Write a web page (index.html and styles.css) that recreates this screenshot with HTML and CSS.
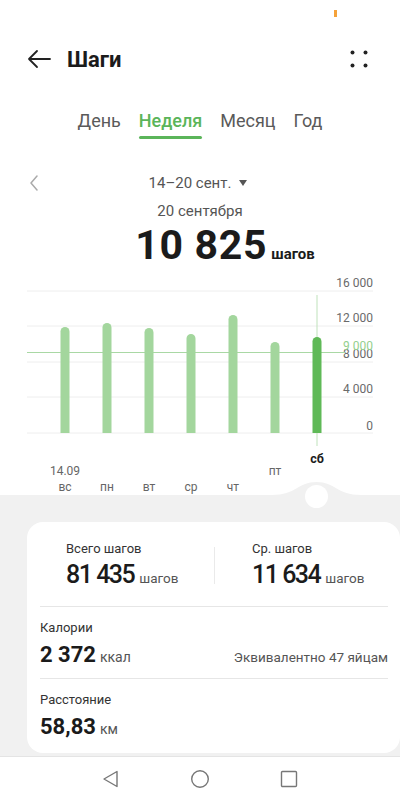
FILE: index.html
```html
<!DOCTYPE html>
<html lang="ru">
<head>
  <meta charset="UTF-8">
  <meta name="viewport" content="width=device-width, initial-scale=1.0">
  <link rel="stylesheet" href="styles.css">
  <title>Шаги</title>
</head>
<body>
  <div class="status"><span class="status-mark"></span></div>

  <header class="topbar">
    <svg class="icon-back" width="26" height="22" viewBox="0 0 26 22">
      <path d="M24 11H3M11 3L3 11L11 19" fill="none" stroke="#222" stroke-width="1.8" stroke-linecap="round" stroke-linejoin="round"/>
    </svg>
    <h1 class="title">Шаги</h1>
    <svg class="icon-more" width="18" height="18" viewBox="0 0 18 18">
      <circle cx="2.5" cy="2.5" r="2" fill="#222"/>
      <circle cx="15.5" cy="2.5" r="2" fill="#222"/>
      <circle cx="2.5" cy="15.5" r="2" fill="#222"/>
      <circle cx="15.5" cy="15.5" r="2" fill="#222"/>
    </svg>
  </header>

  <nav class="tabs">
    <div class="tab">День<span class="tab-bar"></span></div>
    <div class="tab active">Неделя<span class="tab-bar"></span></div>
    <div class="tab">Месяц<span class="tab-bar"></span></div>
    <div class="tab">Год<span class="tab-bar"></span></div>
  </nav>

  <div class="range">
    <svg class="range-prev" width="10" height="16" viewBox="0 0 10 16">
      <path d="M8 1L2 8L8 15" fill="none" stroke="#aaa" stroke-width="1.5" stroke-linecap="round" stroke-linejoin="round"/>
    </svg>
    <span class="range-text">14–20 сент.<span class="range-caret"></span></span>
  </div>
  <div class="day">20 сентября</div>
  <div class="total"><span class="total-num">10 825</span><span class="total-unit">шагов</span></div>

  <svg class="chart" width="400" height="228" viewBox="0 267 400 228">
    <g stroke="#eeeeee" stroke-width="1">
      <line x1="27" y1="291" x2="373" y2="291"/>
      <line x1="27" y1="326" x2="373" y2="326"/>
      <line x1="27" y1="362" x2="373" y2="362"/>
      <line x1="27" y1="397" x2="373" y2="397"/>
      <line x1="27" y1="433" x2="373" y2="433"/>
    </g>
    <g class="axis" text-anchor="end">
      <text x="373" y="287">16 000</text>
      <text x="373" y="322">12 000</text>
      <text x="373" y="358">8 000</text>
      <text x="373" y="393">4 000</text>
      <text x="373" y="430">0</text>
    </g>
    <line x1="317" y1="295" x2="317" y2="446" stroke="#bfe2bb" stroke-width="1"/>
    <line x1="27" y1="352.5" x2="345" y2="352.5" stroke="#a9d8a4" stroke-width="1"/>
    <text class="avg" x="373" y="350" text-anchor="end">9 000</text>
    <g fill="#a3d69d">
      <path d="M60.5 433V331.5A4.5 4.5 0 0 1 69.5 331.5V433Z"/>
      <path d="M102.5 433V327.5A4.5 4.5 0 0 1 111.5 327.5V433Z"/>
      <path d="M144.5 433V332.5A4.5 4.5 0 0 1 153.5 332.5V433Z"/>
      <path d="M186.5 433V338.5A4.5 4.5 0 0 1 195.5 338.5V433Z"/>
      <path d="M228.5 433V319.5A4.5 4.5 0 0 1 237.5 319.5V433Z"/>
      <path d="M270.5 433V346.5A4.5 4.5 0 0 1 279.5 346.5V433Z"/>
    </g>
    <path d="M312.5 433V341.5A4.5 4.5 0 0 1 321.5 341.5V433Z" fill="#5fb957"/>
    <g class="days" text-anchor="middle">
      <text class="sel" x="317" y="463">сб</text>
      <text x="275" y="475">пт</text>
      <text x="65" y="475">14.09</text>
      <text x="65" y="491">вс</text>
      <text x="107" y="491">пн</text>
      <text x="149" y="491">вт</text>
      <text x="191" y="491">ср</text>
      <text x="233" y="491">чт</text>
    </g>
  </svg>

  <section class="summary">
    <svg class="knob" width="400" height="30" viewBox="0 0 400 30">
      <path d="M272 15C296 15 298 2 316.5 2C335 2 337 15 361 15Z" fill="#f1f1f1"/>
      <circle cx="316.5" cy="16.5" r="11.5" fill="#fff"/>
    </svg>

    <div class="card">
      <div class="stats">
        <div class="stat">
          <div class="label">Всего шагов</div>
          <div class="stat-value"><span class="stat-num">81 435</span><span class="unit">шагов</span></div>
        </div>
        <div class="stat-sep"></div>
        <div class="stat">
          <div class="label">Ср. шагов</div>
          <div class="stat-value"><span class="stat-num">11 634</span><span class="unit">шагов</span></div>
        </div>
      </div>
      <div class="row">
        <div class="label">Калории</div>
        <div class="row-value">
          <span class="num">2 372</span><span class="unit">ккал</span>
          <span class="note">Эквивалентно 47 яйцам</span>
        </div>
      </div>
      <div class="row">
        <div class="label">Расстояние</div>
        <div class="row-value">
          <span class="num">58,83</span><span class="unit">км</span>
        </div>
      </div>
    </div>
  </section>

  <footer class="navbar">
    <svg width="20" height="20" viewBox="0 0 20 20">
      <path d="M16 2.5V17.5L3 10Z" fill="none" stroke="#777" stroke-width="1.4" stroke-linejoin="round"/>
    </svg>
    <svg width="20" height="20" viewBox="0 0 20 20">
      <circle cx="10" cy="10" r="8.3" fill="none" stroke="#777" stroke-width="1.4"/>
    </svg>
    <svg width="20" height="20" viewBox="0 0 20 20">
      <rect x="2.5" y="2.5" width="15" height="15" rx="1" fill="none" stroke="#777" stroke-width="1.4"/>
    </svg>
  </footer>
</body>
</html>
```

FILE: styles.css
```css
body {
  margin: 0;
  width: 400px;
  height: 800px;
  overflow: hidden;
  background: #fff;
  font-family: Roboto, "Noto Sans", sans-serif;
  color: #1b1b1b;
}
.status {
  height: 24px;
  display: flex;
  padding-left: 334px;
}
.status-mark {
  width: 3px;
  height: 7px;
  margin-top: 10px;
  background: #f5a23a;
}
.topbar {
  height: 70px;
  display: flex;
  align-items: center;
  padding: 0 32px 0 26px;
}
.title {
  margin: 0 0 0 15px;
  font-size: 22px;
  font-weight: 700;
  flex: 1;
}
.tabs {
  display: flex;
  justify-content: center;
  gap: 18px;
  padding-top: 15px;
}
.tab {
  display: flex;
  flex-direction: column;
  align-items: stretch;
  font-size: 18px;
  line-height: 24px;
  color: #5a5a5a;
}
.tab-bar {
  height: 3px;
  margin-top: 3px;
  border-radius: 2px;
}
.tab.active {
  color: #5bb55a;
  font-weight: 500;
}
.tab.active .tab-bar {
  background: #5bb55a;
}
.range {
  margin-top: 34px;
  height: 20px;
  display: flex;
  align-items: center;
  justify-content: center;
  position: relative;
}
.range-prev {
  position: absolute;
  left: 29px;
  top: 2px;
}
.range-text {
  font-size: 15px;
  color: #555;
  display: flex;
  align-items: center;
  margin-left: -4px;
}
.range-caret {
  width: 0;
  height: 0;
  margin-left: 8px;
  border-left: 4px solid transparent;
  border-right: 4px solid transparent;
  border-top: 6px solid #555;
}
.day {
  margin-top: 8px;
  line-height: 20px;
  text-align: center;
  font-size: 15px;
  color: #555;
}
.total {
  margin-top: 2px;
  height: 44px;
  display: flex;
  justify-content: center;
  align-items: baseline;
  padding-left: 50px;
}
.total-num {
  font-size: 41px;
  line-height: 44px;
  font-weight: 700;
  letter-spacing: 0.7px;
  color: #1b1b1b;
}
.total-unit {
  margin-left: 4px;
  font-size: 15px;
  font-weight: 700;
}
.chart {
  display: block;
}
.axis text {
  font-size: 12px;
  fill: #6a6a6a;
}
.avg {
  font-size: 12px;
  fill: #93cf8d;
}
.days text {
  font-size: 12px;
  fill: #666;
}
.days .sel {
  fill: #1b1b1b;
  font-weight: 700;
  font-size: 12.5px;
}
.summary {
  position: relative;
  background: #f1f1f1;
  padding: 27px 0 3px 27px;
}
.knob {
  position: absolute;
  left: 0;
  top: -15px;
}
.card {
  background: #fff;
  border-radius: 16px;
  width: 373px;
  height: 231px;
}
.stats {
  display: flex;
  padding: 18px 0 16px;
}
.stat {
  flex: 1;
  padding-left: 39px;
}
.stat + .stat-sep + .stat {
  padding-left: 37px;
}
.stat-sep {
  width: 1px;
  height: 37px;
  align-self: center;
  background: #eaeaea;
}
.label {
  font-size: 13px;
  line-height: 18px;
  color: #333;
}
.stat-value {
  margin-top: 2px;
  height: 30px;
  display: flex;
  align-items: baseline;
}
.stat-num {
  font-size: 25px;
  line-height: 30px;
  font-weight: 500;
  letter-spacing: -1.5px;
}
.stat-value .unit {
  margin-left: 5px;
  font-size: 13.5px;
}
.unit {
  margin-left: 4px;
  font-size: 14px;
  color: #555;
}
.row {
  margin: 0 12px 0 13px;
  border-top: 1px solid #e6e6e6;
  padding: 12px 0 9px;
}
.row:last-child {
  padding-bottom: 12px;
}
.row-value {
  margin-top: 4px;
  height: 28px;
  display: flex;
  align-items: baseline;
}
.num {
  font-size: 22px;
  line-height: 28px;
  font-weight: 700;
}
.note {
  margin-left: auto;
  font-size: 13.5px;
  color: #555;
}
.navbar {
  height: 43px;
  border-top: 1px solid #e4e4e4;
  display: flex;
  align-items: center;
  justify-content: center;
  gap: 69px;
}
```
